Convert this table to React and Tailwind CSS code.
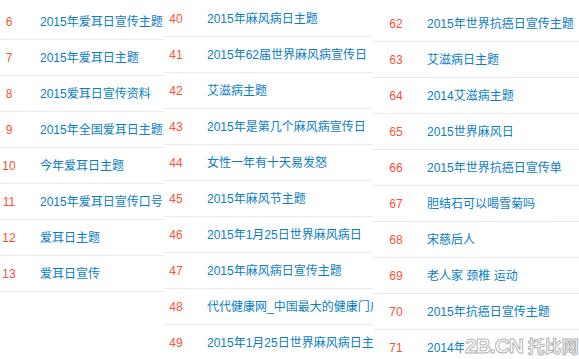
import React from 'react';

const cols = [
  {
    width: 'w-[164px]',
    top: 'pt-[4px]',
    pad: 'pl-0',
    items: [
      [6, '2015年爱耳日宣传主题'],
      [7, '2015年爱耳日主题'],
      [8, '2015爱耳日宣传资料'],
      [9, '2015年全国爱耳日主题'],
      [10, '今年爱耳日主题'],
      [11, '2015年爱耳日宣传口号'],
      [12, '爱耳日主题'],
      [13, '爱耳日宣传'],
    ],
  },
  {
    width: 'w-[209px]',
    top: 'pt-[1px]',
    pad: 'pl-[3px]',
    items: [
      [40, '2015年麻风病日主题'],
      [41, '2015年62届世界麻风病宣传日'],
      [42, '艾滋病主题'],
      [43, '2015年是第几个麻风病宣传日'],
      [44, '女性一年有十天易发怒'],
      [45, '2015年麻风节主题'],
      [46, '2015年1月25日世界麻风病日'],
      [47, '2015年麻风病日宣传主题'],
      [48, '代代健康网_中国最大的健康门户'],
      [49, '2015年1月25日世界麻风病日主题'],
    ],
  },
  {
    width: 'flex-1',
    top: 'pt-[6px]',
    pad: 'pl-[14px]',
    items: [
      [62, '2015年世界抗癌日宣传主题'],
      [63, '艾滋病日主题'],
      [64, '2014艾滋病主题'],
      [65, '2015世界麻风日'],
      [66, '2015年世界抗癌日宣传单'],
      [67, '胆结石可以喝雪菊吗'],
      [68, '宋慈后人'],
      [69, '老人家 颈椎 运动'],
      [70, '2015年抗癌日宣传主题'],
      [71, '2014年艾滋病主题'],
    ],
  },
];

const App = () => {
  return (
    <div
      className="relative w-[579px] h-[359px] overflow-hidden bg-white flex text-[12px]"
      style={{ fontFamily: '"Liberation Sans", Arial, "Noto Sans CJK SC", sans-serif' }}
    >
      {cols.map((col, i) => (
        <ul key={i} className={`${col.width} ${col.top} shrink-0 overflow-hidden bg-white`}>
          {col.items.map(([n, t]) => (
            <li
              key={n}
              className={`h-9 border-b border-[#ebebeb] flex items-center whitespace-nowrap ${col.pad}`}
            >
              <span className="w-[18px] shrink-0 text-center text-[#f9503a]">{n}</span>
              <a className="ml-[22px] shrink-0 text-[#0a7dc6]">{t}</a>
            </li>
          ))}
        </ul>
      ))}

      {/* watermark */}
      <div
        className="absolute left-[464px] top-[333px] w-[115px] h-[26px] pl-[1px] pt-[2px] bg-white text-[21px] font-bold text-white tracking-[-1px] leading-none whitespace-nowrap [-webkit-text-stroke:1px_#b5b5b5]"
        style={{ fontFamily: '"Liberation Sans", "Noto Sans CJK SC", sans-serif' }}
      >
        2B.CN <span className="text-[17px] tracking-normal">托比网</span>
      </div>
    </div>
  );
};

export default App;
